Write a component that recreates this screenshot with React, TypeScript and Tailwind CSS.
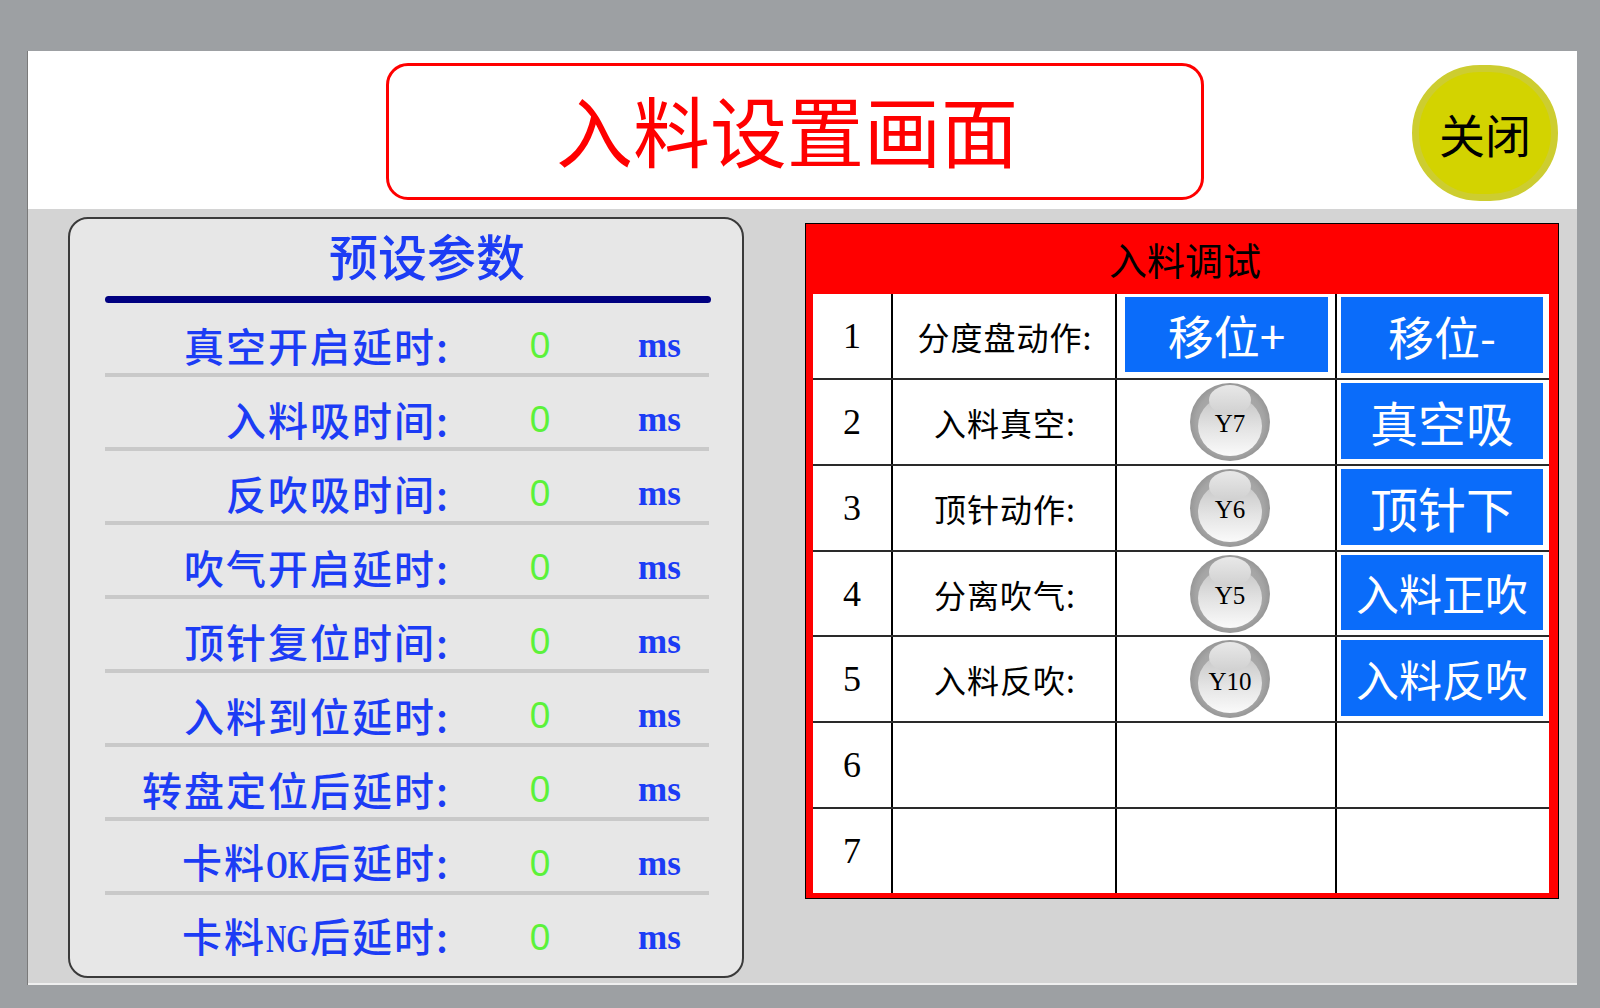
import React from "react";

const params: string[][] = [
  ["真空开启延时:"],
  ["入料吸时间:"],
  ["反吹吸时间:"],
  ["吹气开启延时:"],
  ["顶针复位时间:"],
  ["入料到位延时:"],
  ["转盘定位后延时:"],
  ["卡料", "OK", "后延时:"],
  ["卡料", "NG", "后延时:"],
];

function Lamp({ label }: { label: string }) {
  return (
    <div className="relative w-[82px] h-[80px]">
      <svg className="absolute inset-0" width="82" height="80" viewBox="0 0 82 80">
        <defs>
          <radialGradient id={`outer-${label}`} cx="50%" cy="50%" r="50%">
            <stop offset="0%" stopColor="#bdbdbd" />
            <stop offset="85%" stopColor="#a4a4a4" />
            <stop offset="100%" stopColor="#979797" />
          </radialGradient>
          <linearGradient id={`inner-${label}`} x1="0" y1="0" x2="0" y2="1">
            <stop offset="0%" stopColor="#c4c4c4" />
            <stop offset="55%" stopColor="#e4e4e4" />
            <stop offset="100%" stopColor="#fafafa" />
          </linearGradient>
          <linearGradient id={`hl-${label}`} x1="0" y1="0" x2="0" y2="1">
            <stop offset="0%" stopColor="#e8e8e8" />
            <stop offset="100%" stopColor="#d0d0d0" />
          </linearGradient>
        </defs>
        <ellipse cx="41" cy="40" rx="40" ry="39" fill={`url(#outer-${label})`} />
        <ellipse cx="41" cy="44" rx="32" ry="30" fill={`url(#inner-${label})`} />
        <ellipse cx="41" cy="18" rx="21" ry="15" fill={`url(#hl-${label})`} />
      </svg>
      <span className="absolute inset-0 flex items-center justify-center pt-[4px] text-[25px] leading-none text-black font-['Liberation_Serif',serif]">
        {label}
      </span>
    </div>
  );
}

function BlueBtn({ text, size }: { text: string; size: string }) {
  return (
    <div
      className={`w-full h-full bg-[#0a6cfa] flex items-center justify-center text-white leading-none ${size}`}
    >
      {text}
    </div>
  );
}

export default function App() {
  const rows: {
    n: string;
    label?: string;
    lamp?: string;
    col3?: string;
    col4?: string;
    col4size?: string;
  }[] = [
    { n: "1", label: "分度盘动作:", col3: "移位+", col4: "移位-" },
    { n: "2", label: "入料真空:", lamp: "Y7", col4: "真空吸", col4size: "text-[48px]" },
    { n: "3", label: "顶针动作:", lamp: "Y6", col4: "顶针下", col4size: "text-[48px]" },
    { n: "4", label: "分离吹气:", lamp: "Y5", col4: "入料正吹", col4size: "text-[43px]" },
    { n: "5", label: "入料反吹:", lamp: "Y10", col4: "入料反吹", col4size: "text-[43px]" },
    { n: "6" },
    { n: "7" },
  ];

  return (
    <div className="w-[1600px] h-[1008px] bg-[#9da0a3] pt-[51px] pl-[27px] pr-[23px] pb-[23px] font-['Noto_Sans_CJK_SC',sans-serif]">
      <div className="w-full h-full flex flex-col bg-white border-l border-[#7a7a7a]">
        {/* header */}
        <div className="h-[158px] shrink-0 flex items-start">
          <div className="ml-[358px] mt-[12px] w-[818px] h-[137px] pb-[6px] pr-[16px] border-[3px] border-[#ff0000] rounded-[22px] flex items-center justify-center text-[77px] leading-none text-[#ff0000]">
            入料设置画面
          </div>
          <div className="ml-[208px] mt-[14px] w-[146px] h-[136px] rounded-full bg-[#d3d300] border-[7px] border-[#cdcd30] flex items-center justify-center text-[46px] leading-none text-black">
            关闭
          </div>
        </div>

        {/* content */}
        <div className="flex-1 bg-[#d4d4d4] flex items-start border-b-2 border-[#efefef]">
          {/* left panel */}
          <div className="ml-[40px] mt-[8px] w-[676px] h-[761px] bg-[#e7e7e7] border-2 border-[#3a3a3a] rounded-[20px] flex flex-col">
            <div className="h-[70px] flex items-center justify-center pl-[42px] text-[49px] leading-none text-[#1c3cf5] font-medium">
              预设参数
            </div>
            <div className="ml-[35px] mt-[7px] w-[606px] h-[7px] rounded-full bg-[#000080]" />
            <div className="flex flex-col">
              {params.map((p, i) => (
                <React.Fragment key={p.join("")}>
                  <div className="h-[70px] pt-[14px] flex items-center leading-none">
                    <div className="w-[380px] text-right text-[40px] tracking-[2px] text-[#1c3cf5] font-medium">
                      {p.length === 1 ? (
                        p[0]
                      ) : (
                        <>
                          {p[0]}
                          <span className="inline-block w-[44px] text-left tracking-normal">
                            <span className="inline-block origin-left scale-x-[0.7] text-[40px] font-bold font-['Liberation_Serif',serif]">
                              {p[1]}
                            </span>
                          </span>
                          {p[2]}
                        </>
                      )}
                    </div>
                    <div className="w-[180px] text-center text-[37px] text-[#5cf23a] font-['Liberation_Sans',sans-serif]">
                      0
                    </div>
                    <div className="ml-[8px] text-[35px] text-[#1c3cf5] font-bold font-['Liberation_Serif',serif]">
                      ms
                    </div>
                  </div>
                  {i < params.length - 1 && (
                    <div className="ml-[35px] w-[604px] h-[4px] bg-[#c9c9c9]" />
                  )}
                </React.Fragment>
              ))}
            </div>
          </div>

          {/* right panel */}
          <div className="ml-[61px] mt-[14px] w-[754px] h-[676px] bg-[#ff0000] border border-black flex flex-col">
            <div className="h-[70px] shrink-0 flex items-center justify-center pl-[6px] text-[38px] leading-none text-black">
              入料调试
            </div>
            <div className="ml-[7px] mr-[9px] mb-[5px] flex-1 bg-white flex flex-col">
              {rows.map((r, i) => (
                <div
                  key={r.n}
                  className={`flex-1 flex ${i < rows.length - 1 ? "border-b-2 border-[#2a2a2a]" : ""}`}
                >
                  <div className="w-[80px] border-r-2 border-black flex items-center justify-center text-[36px] leading-none text-black font-['Liberation_Serif',serif]">
                    {r.n}
                  </div>
                  <div className="w-[224px] border-r-2 border-black flex items-center justify-center pl-[2px] text-[32px] tracking-[1px] leading-none text-black">
                    {r.label ?? ""}
                  </div>
                  <div className="w-[220px] border-r-2 border-black flex items-center justify-center">
                    {r.col3 ? (
                      <div className="w-full h-full pt-[3px] pl-[8px] pr-[7px] pb-[6px]">
                        <BlueBtn text={r.col3} size="text-[46px]" />
                      </div>
                    ) : r.lamp ? (
                      <div className="pl-[8px]">
                        <Lamp label={r.lamp} />
                      </div>
                    ) : null}
                  </div>
                  <div className="flex-1 flex items-center justify-center">
                    {r.col4 ? (
                      <div className="w-full h-full pt-[3px] pl-[4px] pr-[6px] pb-[5px]">
                        <BlueBtn text={r.col4} size={r.col4size ?? "text-[46px]"} />
                      </div>
                    ) : null}
                  </div>
                </div>
              ))}
            </div>
          </div>
        </div>
      </div>
    </div>
  );
}
